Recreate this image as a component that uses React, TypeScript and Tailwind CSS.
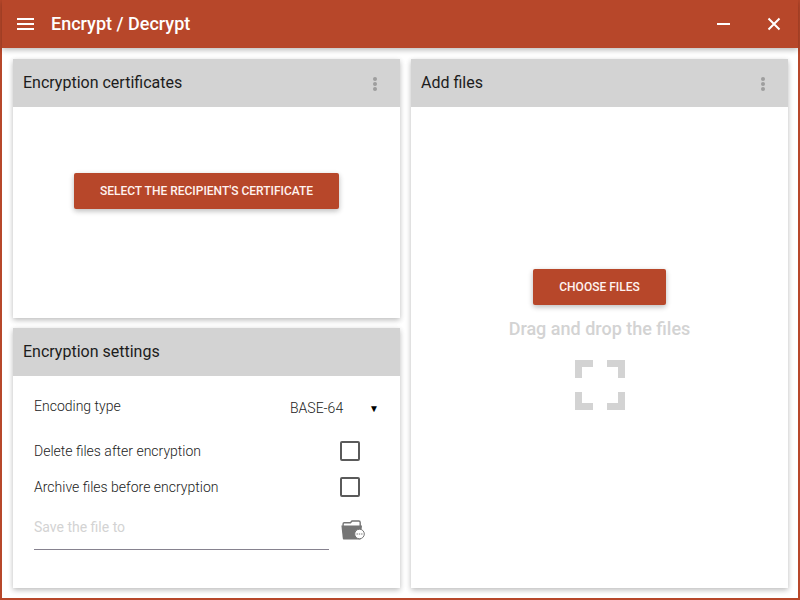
import React from "react";

const raised =
  "shadow-[0_2px_5px_0_rgba(0,0,0,0.16),0_2px_6px_0_rgba(0,0,0,0.12)]";

function MoreIcon() {
  return (
    <svg width="6" height="16" viewBox="0 0 6 16" fill="#9e9e9e" aria-hidden="true">
      <circle cx="3" cy="3" r="2" />
      <circle cx="3" cy="8" r="2" />
      <circle cx="3" cy="13" r="2" />
    </svg>
  );
}

function Panel({
  title,
  menu = false,
  className = "",
  children,
}: {
  title: string;
  menu?: boolean;
  className?: string;
  children: React.ReactNode;
}) {
  return (
    <section className={`flex min-h-0 flex-col bg-white ${raised} ${className}`}>
      <header className="flex h-12 shrink-0 items-center justify-between bg-[#d3d3d3] pl-[10px] pr-[22px]">
        <h2 className="text-base font-normal text-[#1c1c1c]">{title}</h2>
        {menu && (
          <button type="button" aria-label={`${title} menu`} className="pt-[2px]">
            <MoreIcon />
          </button>
        )}
      </header>
      {children}
    </section>
  );
}

function ActionButton({ children }: { children: React.ReactNode }) {
  return (
    <button
      type="button"
      className={`h-9 rounded-[2px] bg-[#b7472a] px-[26px] text-xs font-medium text-[#fff3f0] uppercase ${raised}`}
    >
      {children}
    </button>
  );
}

function CheckRow({ id, label }: { id: string; label: string }) {
  return (
    <div className="flex h-9 items-center justify-between pr-[19px]">
      <label htmlFor={id}>{label}</label>
      <input
        id={id}
        type="checkbox"
        className="size-5 appearance-none rounded-[2px] border-2 border-[#5a5a5a] checked:bg-[#b7472a]"
      />
    </div>
  );
}

function FolderIcon() {
  return (
    <svg width="24" height="20" viewBox="0 0 24 20" aria-hidden="true">
      <path
        d="M2.1 6V4Q2.1 2.8 3.2 2.8H9.4L11 1H17.8Q19.2 1 19.2 2.4V6"
        fill="none"
        stroke="#757575"
        strokeWidth="1.4"
      />
      <path d="M0.4 5.4H21L19.6 19.4H2.4Q1.9 19.4 1.8 18.6Z" fill="#757575" />
      <circle cx="18.5" cy="14" r="4.8" fill="#fff" stroke="#757575" />
      <path d="M15.5 14h1.4M17.8 14h1.4M20.1 14h1.4" stroke="#757575" strokeWidth="1.2" />
    </svg>
  );
}

export default function App() {
  return (
    <div className="flex h-screen flex-col border-2 border-t-0 border-[#b7472a] bg-white font-[Roboto,sans-serif]">
      <header
        className={`flex h-12 shrink-0 items-center bg-[#b7472a] pr-[17px] pl-[15px] text-white ${raised}`}
      >
        <button type="button" aria-label="Open menu">
          <svg width="17" height="12" viewBox="0 0 17 12" fill="#fff" aria-hidden="true">
            <path d="M0 0h17v2H0zM0 5h17v2H0zM0 10h17v2H0z" />
          </svg>
        </button>
        <h1 className="ml-[17px] flex-1 text-lg font-medium">Encrypt / Decrypt</h1>
        <button type="button" aria-label="Minimize">
          <svg width="13" height="14" viewBox="0 0 13 14" aria-hidden="true">
            <path d="M0 7h13" stroke="#fff" strokeWidth="2" />
          </svg>
        </button>
        <button type="button" aria-label="Close" className="ml-[37px]">
          <svg width="14" height="14" viewBox="0 0 14 14" aria-hidden="true">
            <path d="M1.5 1.5l11 11M12.5 1.5l-11 11" stroke="#fff" strokeWidth="2" />
          </svg>
        </button>
      </header>

      <main className="grid min-h-0 flex-1 grid-cols-[387fr_377fr] grid-rows-[259fr_260fr] gap-x-[11px] gap-y-[10px] pt-[11px] pr-[10px] pb-[10px] pl-[11px]">
        <Panel title="Encryption certificates" menu>
          <div className="flex flex-1 items-center justify-center pb-11">
            <ActionButton>Select the recipient's certificate</ActionButton>
          </div>
        </Panel>

        <Panel title="Add files" menu className="row-span-2">
          <div className="flex flex-1 flex-col items-center justify-center pb-4">
            <ActionButton>Choose files</ActionButton>
            <p className="mt-[10px] text-lg font-medium text-[#d3d3d3]">
              Drag and drop the files
            </p>
            <svg className="mt-[17px]" width="50" height="50" viewBox="0 0 50 50" fill="#d3d3d3" aria-hidden="true">
              <path d="M0 0h18v7H7v11H0zM32 0h18v18h-7V7H32zM0 32h7v11h11v7H0zM43 32h7v18H32v-7h11z" />
            </svg>
          </div>
        </Panel>

        <Panel title="Encryption settings">
          <div className="flex-1 px-[21px] pt-3 text-sm font-light text-[#222]">
            <div className="flex h-9 items-center justify-between">
              <label htmlFor="encoding">Encoding type</label>
              <div className="relative mt-1">
                <select
                  id="encoding"
                  defaultValue="BASE-64"
                  className="w-[89px] appearance-none bg-transparent font-light text-[#222]"
                >
                  <option>BASE-64</option>
                  <option>DER</option>
                </select>
                <span className="pointer-events-none absolute top-1 right-0 text-[10px] text-black" aria-hidden="true">
                  ▼
                </span>
              </div>
            </div>
            <div className="mt-[9px]">
              <CheckRow id="delete-files" label="Delete files after encryption" />
              <CheckRow id="archive-files" label="Archive files before encryption" />
            </div>
            <div className="flex items-center justify-between pr-[14px]">
              <input
                type="text"
                aria-label="Save the file to"
                placeholder="Save the file to"
                className="mr-3 h-[45px] min-w-0 flex-1 border-b border-[#86828f] font-normal outline-none placeholder:text-[#d3d3d3]"
              />
              <button type="button" aria-label="Choose folder" className="pt-1">
                <FolderIcon />
              </button>
            </div>
          </div>
        </Panel>
      </main>
    </div>
  );
}
